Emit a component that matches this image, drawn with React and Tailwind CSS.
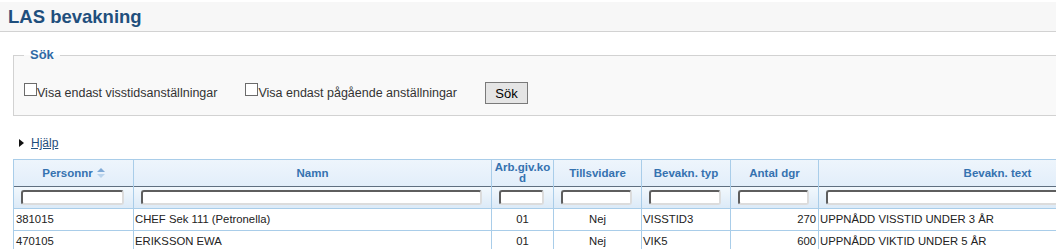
import React from "react";

const cols = [120, 358, 62, 88, 89, 88, 358];

function SortIcon() {
  return (
    <svg width="8" height="10" viewBox="0 0 8 10" className="inline-block ml-[4px] align-[-1px]">
      <polygon points="4,0 8,4 0,4" fill="#7fa9d6" />
      <polygon points="0,6 8,6 4,10" fill="#b9d3ec" />
    </svg>
  );
}

function Check() {
  return <span className="inline-block w-[13px] h-[13px] -mt-[3px] border border-[#6b6b6b] bg-white shrink-0" />;
}

function FilterInput() {
  return (
    <div className="h-[15px] w-full rounded-[3px] bg-white border-2 border-t-[#5e5e5e] border-l-[#5e5e5e] border-r-[#dcdcdc] border-b-[#dcdcdc]" />
  );
}

export default function App() {
  const rows = [
    ["381015", "CHEF Sek 111 (Petronella)", "01", "Nej", "VISSTID3", "270", "UPPNÅDD VISSTID UNDER 3 ÅR"],
    ["470105", "ERIKSSON EWA", "01", "Nej", "VIK5", "600", "UPPNÅDD VIKTID UNDER 5 ÅR"],
  ];
  const th = "border-l border-r border-[#a9cde9] text-center align-middle font-bold text-[11.5px] leading-[11px] text-[#3572b0]";
  return (
    <div className="w-full h-[249px] overflow-hidden bg-white" style={{ fontFamily: '"Liberation Sans", Arial, sans-serif' }}>
      <div className="w-[1270px]">
        <div className="mt-[2px] h-[30px] bg-[#f7f7f7] border-b border-[#d2d2d2] pl-[8px] flex items-center">
          <h1 className="text-[18.5px] font-bold text-[#1f4f7d] leading-none pt-[1px]">LAS bevakning</h1>
        </div>

        <fieldset className="mt-[15px] ml-[13px] w-[1240px] h-[69px] border border-[#d2d2d2] bg-[#f9f9f9] px-[10px]">
          <legend className="px-[6px] text-[13px] font-bold text-[#2f6aa6] leading-[16px]">Sök</legend>
          <div className="flex items-center mt-[19px] text-[12.5px] leading-[15px] text-[#333]">
            <label className="flex items-start">
              <Check />
              <span>Visa endast visstidsanställningar</span>
            </label>
            <label className="flex items-start ml-[28px]">
              <Check />
              <span>Visa endast pågående anställningar</span>
            </label>
            <button className="ml-[28px] w-[43px] h-[22px] border border-[#7a7a7a] bg-[#e5e5e5] text-[13px] text-black leading-none">
              Sök
            </button>
          </div>
        </fieldset>

        <div className="mt-[20px] ml-[19px] flex items-center h-[14px]">
          <svg width="5" height="8" viewBox="0 0 5 8">
            <polygon points="0,0 5,4 0,8" fill="#111" />
          </svg>
          <a className="ml-[7px] text-[12px] text-[#1f4f7d] underline leading-none">Hjälp</a>
        </div>

        <table className="mt-[9px] ml-[13px] border-collapse table-fixed border border-[#a9cde9]" style={{ width: cols.reduce((a, b) => a + b, 0) }}>
          <colgroup>
            {cols.map((w, i) => (
              <col key={i} style={{ width: w }} />
            ))}
          </colgroup>
          <thead>
            <tr className="h-[27px] bg-gradient-to-b from-[#eef5fc] to-[#e2eefa] border-b border-b-[#5f6f80]">
              <th className={th}>Personnr<SortIcon /></th>
              <th className={th}>Namn</th>
              <th className={th + " break-all px-[2px]"}>Arb.giv.kod</th>
              <th className={th}>Tillsvidare</th>
              <th className={th}>Bevakn. typ</th>
              <th className={th}>Antal dgr</th>
              <th className={th}>Bevakn. text</th>
            </tr>
            <tr className="h-[22px] bg-gradient-to-b from-[#f2f8fd] to-[#dceaf7] border-b border-b-[#a9cde9]">
              {cols.map((w, i) => (
                <td key={i} className="border-l border-r border-[#a9cde9] pl-[7px] pr-[9px] align-middle">
                  <FilterInput />
                </td>
              ))}
            </tr>
          </thead>
          <tbody>
            {rows.map((r, ri) => (
              <tr key={ri} className="h-[22px] bg-white border-b border-[#a9cde9] text-[11.3px] text-[#222]">
                <td className="border border-[#a9cde9] px-[2px]">{r[0]}</td>
                <td className="border border-[#a9cde9] px-[1px]">{r[1]}</td>
                <td className="border border-[#a9cde9] px-[2px] text-center">{r[2]}</td>
                <td className="border border-[#a9cde9] px-[2px] text-center">{r[3]}</td>
                <td className="border border-[#a9cde9] px-[1px]">{r[4]}</td>
                <td className="border border-[#a9cde9] px-[2px] text-right">{r[5]}</td>
                <td className="border border-[#a9cde9] px-[1px]">{r[6]}</td>
              </tr>
            ))}
          </tbody>
        </table>
      </div>
    </div>
  );
}
